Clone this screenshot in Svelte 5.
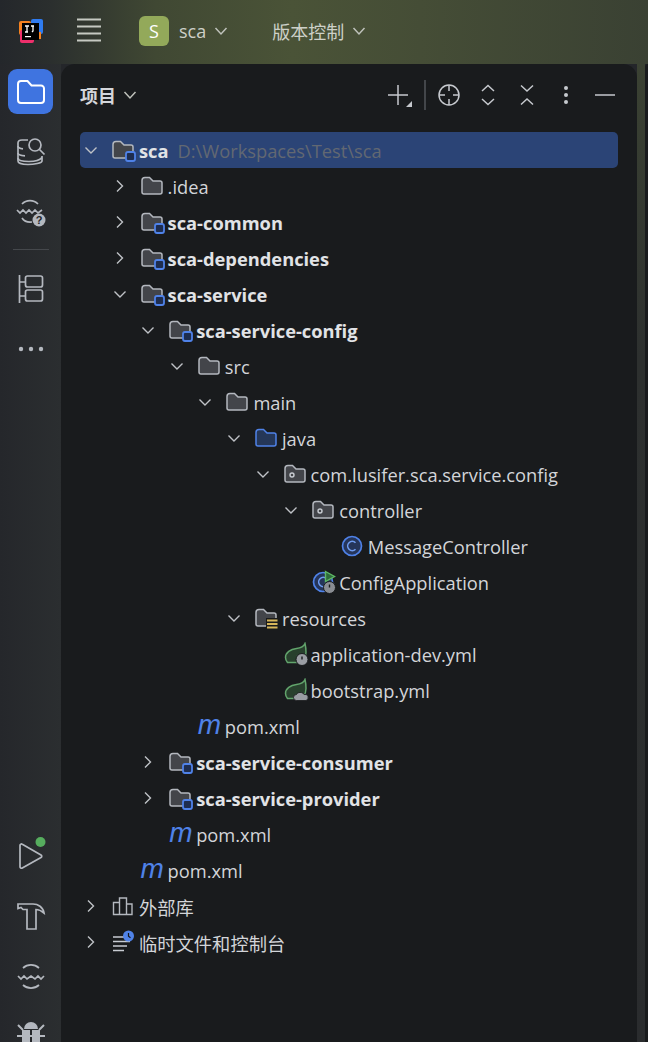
<script>
  // depth, chevron (open/closed/none), icon, label, style
  const rows = [
    { d: 0, chev: 'open', icon: 'module', label: 'sca', bold: true, path: 'D:\\Workspaces\\Test\\sca', selected: true },
    { d: 1, chev: 'closed', icon: 'folder', label: '.idea' },
    { d: 1, chev: 'closed', icon: 'module', label: 'sca-common', bold: true },
    { d: 1, chev: 'closed', icon: 'module', label: 'sca-dependencies', bold: true },
    { d: 1, chev: 'open', icon: 'module', label: 'sca-service', bold: true },
    { d: 2, chev: 'open', icon: 'module', label: 'sca-service-config', bold: true },
    { d: 3, chev: 'open', icon: 'folder', label: 'src' },
    { d: 4, chev: 'open', icon: 'folder', label: 'main' },
    { d: 5, chev: 'open', icon: 'source', label: 'java' },
    { d: 6, chev: 'open', icon: 'package', label: 'com.lusifer.sca.service.config' },
    { d: 7, chev: 'open', icon: 'package', label: 'controller' },
    { d: 8, icon: 'class', label: 'MessageController' },
    { d: 7, icon: 'app', label: 'ConfigApplication' },
    { d: 5, chev: 'open', icon: 'resources', label: 'resources' },
    { d: 6, icon: 'springon', label: 'application-dev.yml' },
    { d: 6, icon: 'springcloud', label: 'bootstrap.yml' },
    { d: 3, icon: 'maven', label: 'pom.xml' },
    { d: 2, chev: 'closed', icon: 'module', label: 'sca-service-consumer', bold: true },
    { d: 2, chev: 'closed', icon: 'module', label: 'sca-service-provider', bold: true },
    { d: 2, icon: 'maven', label: 'pom.xml' },
    { d: 1, icon: 'maven', label: 'pom.xml' },
    { d: 0, chev: 'closed', icon: 'library', label: '外部库' },
    { d: 0, chev: 'closed', icon: 'scratch', label: '临时文件和控制台' }
  ];
</script>

{#snippet chevron(dir)}
  <svg class="chev" width="16" height="16" viewBox="0 0 16 16">
    {#if dir === 'open'}
      <path d="M2.500 5.500 8 11l5.500-5.500" />
    {:else}
      <path d="M5 2.500 10.500 8 5 13.500" />
    {/if}
  </svg>
{/snippet}

{#snippet folderShape(stroke, fill)}
  <path d="M1 6.500a3 3 0 0 1 3-3h4.500l3.500 3.500h7a2 2 0 0 1 2 2V18a2 2 0 0 1-2 2H3a2 2 0 0 1-2-2z" fill={fill} stroke={stroke} stroke-width="1.500" />
{/snippet}

{#snippet fileIcon(kind)}
  {#if kind === 'maven'}
    <span class="mvn">m</span>
  {:else}
    <svg class="ficon" width="26" height="24" viewBox="0 0 26 24">
      {#if kind === 'folder'}
        {@render folderShape('#b4b8bf', '#43454a')}
      {:else if kind === 'module'}
        {@render folderShape('#b4b8bf', '#43454a')}
        <rect x="14" y="14" width="9" height="9" rx="2" fill="#1e2d4f" stroke="#4f82e8" stroke-width="1.800" />
      {:else if kind === 'source'}
        {@render folderShape('#4f82e8', '#253758')}
      {:else if kind === 'package'}
        {@render folderShape('#b4b8bf', '#43454a')}
        <circle cx="8" cy="13" r="2" fill="none" stroke="#c8ccd2" stroke-width="1.400" />
      {:else if kind === 'resources'}
        {@render folderShape('#b4b8bf', '#43454a')}
        <rect x="11" y="12" width="12" height="12" fill="#191b1d" />
        <path d="M12 14.500h10.500M12 18h10.500M12 21.500h10.500" stroke="#d6b65a" stroke-width="2" />
      {:else if kind === 'class'}
        <circle cx="11" cy="12" r="9.500" fill="#25355a" stroke="#4f82e8" stroke-width="1.700" />
        <path d="M14.500 8.700a4.600 4.600 0 1 0 0 6.600" fill="none" stroke="#6f9cf0" stroke-width="1.600" />
      {:else if kind === 'app'}
        <circle cx="11" cy="12" r="9.500" fill="#25355a" stroke="#4f82e8" stroke-width="1.700" />
        <path d="M14.500 8.700a4.600 4.600 0 1 0 0 6.600" fill="none" stroke="#6f9cf0" stroke-width="1.600" />
        <path d="M13.500 1.500 22.500 6.500 13.500 11.500z" fill="#2f6b3c" stroke="#5fb865" stroke-width="1.400" />
        <circle cx="17.500" cy="17.500" r="6" fill="#8a8d93" stroke="#191b1d" stroke-width="1" />
        <path d="M17.500 14.500v3" stroke="#191b1d" stroke-width="1.400" />
      {:else if kind === 'springon' || kind === 'springcloud'}
        <path d="M21 1.500c-1.500 3.500-4.500 4.500-8.500 5C6.500 7.200 1.500 10.500 1.500 15.500c0 2 .8 3.500 2 5h9c6 0 9.500-4 9.500-10 0-3-.3-6-1-9z" fill="#28402d" stroke="#62a46c" stroke-width="1.500" />
        {#if kind === 'springon'}
          <circle cx="18" cy="17.500" r="6" fill="#9a9da3" stroke="#191b1d" stroke-width="1" />
          <path d="M18 14.500v3" stroke="#191b1d" stroke-width="1.400" />
        {:else}
          <path d="M12.500 22.500a3 3 0 0 1 0-6c.8-2.500 6-3 7.500 0a3 3 0 0 1 2 6z" fill="#9a9da3" stroke="#191b1d" stroke-width=".8" />
        {/if}
      {:else if kind === 'library'}
        <path d="M1.500 8.500h6v12h-6zM7.500 4h7v16.500h-7zM14.500 10h5.500v10.500h-5.500z" fill="none" stroke="#b4b8bf" stroke-width="1.400" />
      {:else if kind === 'scratch'}
        <path d="M1 7h15M1 11.500h17M1 16h14M1 20.500h11" stroke="#c8ccd2" stroke-width="1.500" />
        <circle cx="16.500" cy="6" r="5.500" fill="#4f82e8" />
        <path d="M16.500 3v3.300l2 1.500" fill="none" stroke="#16181b" stroke-width="1.200" />
      {/if}
    </svg>
  {/if}
{/snippet}

<div class="window">
  <header class="topbar">
    <svg class="logo" width="26" height="26" viewBox="0 0 26 26">
      <rect x="13" y="1" width="12" height="15" rx="2" fill="#2f7bf0" />
      <rect x="1" y="3" width="12" height="14" rx="2" fill="#f58220" />
      <rect x="2" y="12" width="14" height="13" rx="2" fill="#ee2f6b" />
      <rect x="17" y="14" width="6" height="7" fill="#f58220" />
      <rect x="4" y="5" width="17" height="17" fill="#000" />
      <path d="M7 8h4M9 8v6M7 14h3M13 8h3M15 8v5l-1 1" fill="none" stroke="#fff" stroke-width="1.300" />
      <rect x="7" y="18" width="6" height="1.200" fill="#fff" />
    </svg>
    <svg class="burger" width="24" height="24" viewBox="0 0 24 24">
      <path d="M0 1.500h24M0 8.500h24M0 15.500h24M0 22.500h24" stroke="#c6c9c2" stroke-width="2.200" />
    </svg>
    <span class="badge">S</span>
    <span class="menu">sca</span>
    <svg class="menu-chev" width="14" height="14" viewBox="0 0 14 14"><path d="M1.500 4 7 10l5.500-6" /></svg>
    <span class="menu vcs">版本控制</span>
    <svg class="menu-chev" width="14" height="14" viewBox="0 0 14 14"><path d="M1.500 4 7 10l5.500-6" /></svg>
  </header>

  <div class="body">
    <aside class="sidebar">
      <div class="side-group">
        <button class="side-btn active" aria-label="项目">
          <svg width="30" height="26" viewBox="0 0 30 26"><path d="M2 5a3 3 0 0 1 3-3h6.500l4 4.500H25a3 3 0 0 1 3 3V21a3 3 0 0 1-3 3H5a3 3 0 0 1-3-3z" fill="none" stroke="#fff" stroke-width="2" /></svg>
        </button>
        <button class="side-btn" aria-label="数据库">
          <svg width="30" height="30" viewBox="0 0 30 30" class="side-line">
            <path d="M12 3H6C3 3 2 4 2 6v18c0 2 4 3.500 10 3.500S26 26 26 24v-5" />
            <path d="M2 9c0 1.500 2 2.500 5 2.800M2 16c0 1.500 3 2.500 7 2.800M2 21c0 2.500 4 3.500 11 3.500 6 0 11-1.500 13-4" />
            <circle cx="19" cy="8" r="6" />
            <path d="m23.500 12.500 5 5" />
          </svg>
        </button>
        <button class="side-btn" aria-label="服务">
          <svg width="30" height="30" viewBox="0 0 30 30" class="side-line">
            <path d="M6 7a11 11 0 0 1 16 0M1 13l3 3 3-3 3 3 3-3 3 3 3-3 3 3 4-3M6 21c2 3 6 4.500 10 4" />
            <circle cx="23" cy="23" r="6.500" fill="#b4b8bf" stroke="none" />
            <text class="q" x="23" y="27">?</text>
          </svg>
        </button>
        <span class="divider"></span>
        <button class="side-btn" aria-label="结构">
          <svg width="26" height="30" viewBox="0 0 26 30" class="side-line">
            <path d="M1.500 1v28M1.500 8h6M1.500 22h6" />
            <rect x="7.500" y="2" width="17" height="11" rx="2" />
            <rect x="7.500" y="16" width="17" height="11" rx="2" />
          </svg>
        </button>
        <button class="side-btn" aria-label="更多">
          <svg width="26" height="6" viewBox="0 0 26 6"><circle cx="3" cy="3" r="2.200" fill="#b4b8bf" /><circle cx="13" cy="3" r="2.200" fill="#b4b8bf" /><circle cx="23" cy="3" r="2.200" fill="#b4b8bf" /></svg>
        </button>
      </div>
      <div class="side-group bottom">
        <button class="side-btn" aria-label="运行">
          <svg class="side-line run" width="30" height="30" viewBox="0 0 30 30">
            <path d="M4 4.500a1.500 1.500 0 0 1 2.300-1.300L25 14a1.500 1.500 0 0 1 0 2.600L6.300 27a1.500 1.500 0 0 1-2.300-1.300z" />
            <circle cx="24.500" cy="1" r="5" fill="#56ad5e" stroke="none" />
          </svg>
        </button>
        <button class="side-btn" aria-label="构建">
          <svg width="30" height="30" viewBox="0 0 30 30" class="side-line">
            <path d="M2 3h15c5 0 10 3 11 9-3-2.500-6-3.500-8-3.500V28h-9V8.500H7L5 6.500 2 7.500z" />
          </svg>
        </button>
        <button class="side-btn" aria-label="服务">
          <svg width="30" height="30" viewBox="0 0 30 30" class="side-line">
            <path d="M7 7a12 12 0 0 1 16 0M2 15l3 3 3-3 3 3 4-3 4 3 3-3 3 3 3-3M7 24a12 12 0 0 0 16 0" />
          </svg>
        </button>
        <button class="side-btn" aria-label="调试">
          <svg width="30" height="30" viewBox="0 0 30 30">
            <path d="M8 8a7 7 0 0 1 14 0z" fill="#b4b8bf" />
            <path d="M6 9h18v14a9 9 0 0 1-18 0z" fill="#b4b8bf" />
            <path d="M15 9v22" stroke="#24262a" stroke-width="2" />
            <path d="M1 15h28M2 4l5 5M28 4l-5 5" stroke="#b4b8bf" stroke-width="2" />
          </svg>
        </button>
      </div>
    </aside>

    <main class="panel">
      <div class="panel-head">
        <span class="title">项目</span>
        <svg class="menu-chev title-chev" width="14" height="14" viewBox="0 0 14 14"><path d="M1.500 4 7 10l5.500-6" /></svg>
        <div class="tools">
          <svg class="tool plus" width="24" height="24" viewBox="0 0 24 24">
            <path d="M10 2v20M0 12h20" />
            <path d="M24 18v6h-6z" fill="#c6c9ce" stroke="none" />
          </svg>
          <span class="tool-sep"></span>
          <span class="tool-cell">
            <svg width="22" height="22" viewBox="0 0 22 22" class="tool">
              <circle cx="11" cy="11" r="10" />
              <path d="M11 1v6M11 15v6M1 11h6M15 11h6" />
            </svg>
          </span>
          <span class="tool-cell">
            <svg width="14" height="22" viewBox="0 0 14 22" class="tool">
              <path d="M1 7l6-5.500L13 7M1 15l6 5.500 6-5.500" />
            </svg>
          </span>
          <span class="tool-cell">
            <svg width="14" height="22" viewBox="0 0 14 22" class="tool">
              <path d="M1 1.500l6 5.500 6-5.500M1 20.500 7 15l6 5.500" />
            </svg>
          </span>
          <span class="tool-cell">
            <svg width="6" height="20" viewBox="0 0 6 20"><circle cx="3" cy="3" r="2" fill="#c6c9ce" /><circle cx="3" cy="10" r="2" fill="#c6c9ce" /><circle cx="3" cy="17" r="2" fill="#c6c9ce" /></svg>
          </span>
          <span class="tool-cell">
            <svg width="20" height="4" viewBox="0 0 20 4" class="tool"><path d="M0 2h20" /></svg>
          </span>
        </div>
      </div>

      <div class="tree">
        {#each rows as row}
          <div class="row" class:selected={row.selected} style="padding-left: {row.d * 28.6 + 3}px">
            <span class="chev-slot">
              {#if row.chev}{@render chevron(row.chev)}{/if}
            </span>
            {@render fileIcon(row.icon)}
            <span class="label" class:bold={row.bold}>{row.label}</span>
            {#if row.path}<span class="path">{row.path}</span>{/if}
          </div>
        {/each}
      </div>
    </main>

    <div class="gutter"></div>
    <div class="next-panel"></div>
  </div>
</div>

<style>
  :global(body) {
    margin: 0;
    background: #24262a;
  }

  .window {
    width: 648px;
    height: 1042px;
    overflow: hidden;
    display: flex;
    flex-direction: column;
    font-family: "Open Sans", "Noto Sans CJK SC", sans-serif;
    background: linear-gradient(90deg, #24272b 0%, #2b2f2e 8%, #404833 24%, #4a5337 45%, #454d36 65%, #3a4133 100%) no-repeat;
    background-size: 100% 64px;
    background-color: #24262a;
  }

  .topbar {
    height: 64px;
    flex: none;
    display: flex;
    align-items: center;
    padding-left: 18px;
    box-sizing: border-box;
    padding-bottom: 2px;
  }

  .burger {
    margin-left: 33px;
    margin-bottom: 2px;
  }

  .badge {
    width: 30px;
    height: 30px;
    margin-left: 38px;
    border-radius: 6px;
    background: #93a95a;
    color: #fff;
    font-size: 18px;
    line-height: 30px;
    text-align: center;
  }

  .menu {
    margin-left: 10px;
    color: #cdd0c8;
    font-size: 18px;
  }

  .vcs {
    margin-left: 44px;
  }

  .menu-chev {
    margin-left: 8px;
  }

  .menu-chev path {
    fill: none;
    stroke: #bfc2bb;
    stroke-width: 1.500;
  }

  .body {
    flex: 1;
    min-height: 0;
    display: flex;
  }

  .sidebar {
    width: 61px;
    flex: none;
    display: flex;
    flex-direction: column;
    justify-content: space-between;
    align-items: center;
    background: linear-gradient(90deg, #25272b, #2b2e30);
  }

  .side-group {
    display: flex;
    flex-direction: column;
    align-items: center;
  }

  .side-group.bottom {
    gap: 15px;
    margin-bottom: -16px;
  }

  .side-btn {
    width: 45px;
    height: 45px;
    padding: 0;
    border: none;
    border-radius: 9px;
    background: none;
    display: flex;
    align-items: center;
    justify-content: center;
  }

  .side-group:not(.bottom) .side-btn {
    margin-top: 15px;
  }

  .side-group:not(.bottom) .active {
    margin-top: 5px;
    background: #3f74e0;
  }

  .side-line {
    fill: none;
    stroke: #b4b8bf;
    stroke-width: 1.700;
    overflow: visible;
  }

  .q {
    fill: #24262a;
    stroke: none;
    font-size: 11px;
    font-weight: 700;
    text-anchor: middle;
  }

  .divider {
    width: 36px;
    height: 1px;
    margin-top: 15px;
    background: #45484c;
  }

  .divider + .side-btn {
    margin-top: 16px !important;
  }

  .panel {
    width: 576px;
    flex: none;
    background: #191b1d;
    border-radius: 14px 14px 0 0;
    box-sizing: border-box;
    padding: 0 19px;
  }

  .gutter {
    width: 8px;
    flex: none;
    background: linear-gradient(180deg, #3b4233 0%, #2d302f 30%, #2a2c2e 100%);
  }

  .next-panel {
    flex: 1;
    background: #191b1d;
    border-radius: 6px 0 0 0;
  }

  .panel-head {
    height: 68px;
    display: flex;
    align-items: center;
    padding-bottom: 6px;
    box-sizing: border-box;
  }

  .title {
    color: #d4d6da;
    font-size: 18px;
    font-weight: 700;
  }

  .title-chev {
    margin-left: 7px;
  }

  .tools {
    margin-left: auto;
    margin-right: -6.500px;
    display: flex;
    align-items: center;
  }

  .tool-cell {
    width: 39px;
    display: flex;
    justify-content: center;
    align-items: center;
  }

  .tool {
    fill: none;
    stroke: #c6c9ce;
    stroke-width: 1.500;
    display: block;
  }

  .plus {
    margin-right: 12px;
  }

  .tool-sep {
    width: 1.500px;
    height: 30px;
    margin-right: 4px;
    background: #43464a;
  }

  .tree {
    display: flex;
    flex-direction: column;
  }

  .row {
    height: 36px;
    flex: none;
    display: flex;
    align-items: center;
    border-radius: 5px;
    width: 538px;
    box-sizing: border-box;
    white-space: nowrap;
    color: #d3d5d9;
    font-size: 18.300px;
  }

  .row.selected {
    background: #2b4476;
  }

  .chev-slot {
    width: 29px;
    flex: none;
    display: flex;
    justify-content: flex-start;
  }

  .chev {
    fill: none;
    stroke: #bfc2c7;
    stroke-width: 1.400;
  }

  .ficon {
    flex: none;
  }

  .mvn {
    width: 26px;
    flex: none;
    color: #4f82e8;
    font-family: "Liberation Sans", sans-serif;
    font-style: italic;
    font-size: 28px;
    line-height: 36px;
    margin-top: -2px;
  }

  .label {
    margin-left: 1px;
    padding-top: 1px;
  }

  .label.bold {
    font-weight: 700;
    color: #e1e3e6;
  }

  .path {
    margin-left: 9px;
    padding-top: 1px;
    color: #626872;
  }
</style>
